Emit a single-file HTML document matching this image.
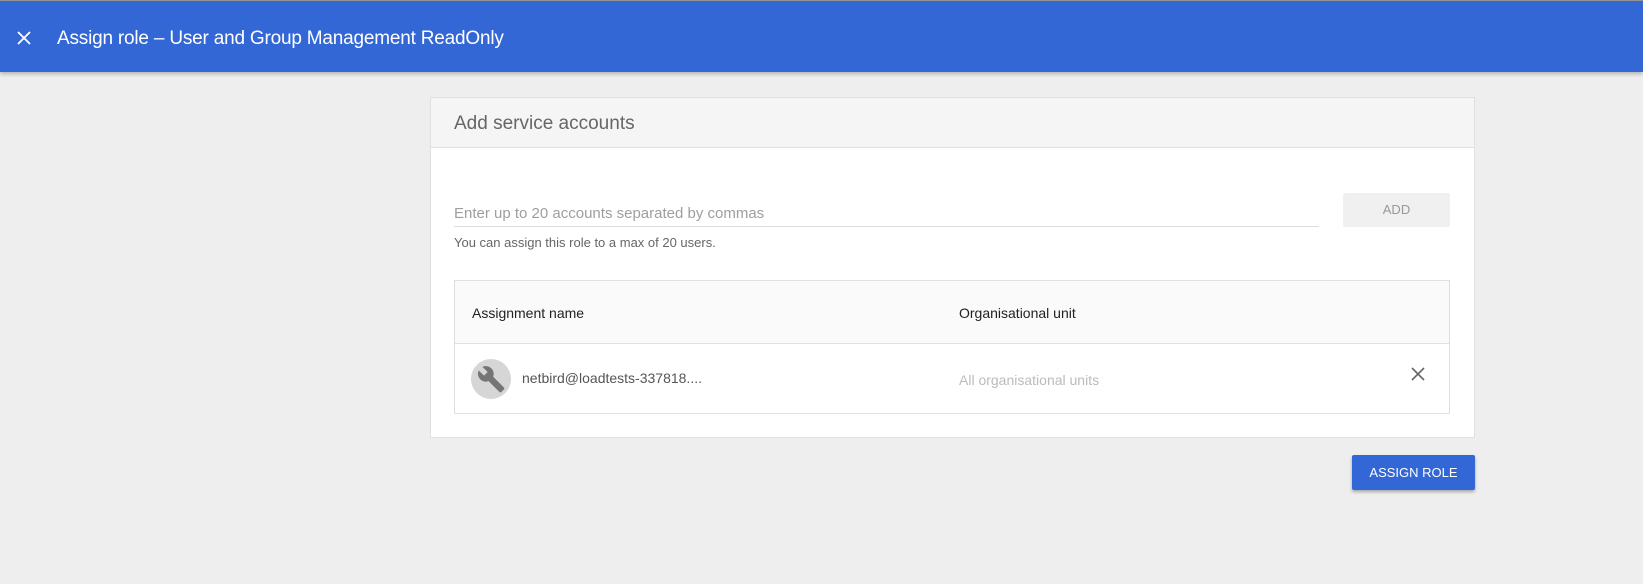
<!DOCTYPE html>
<html><head><meta charset="utf-8"><style>
*{margin:0;padding:0;box-sizing:border-box}
body{width:1643px;height:584px;background:#eeeeee;font-family:"Liberation Sans",sans-serif;position:relative;overflow:hidden}
.top{position:absolute;left:0;top:0;width:1643px;height:1px;background:#999}
.hdr{position:absolute;left:0;top:1px;width:1643px;height:71px;background:#3367d6;box-shadow:0 2px 4px rgba(0,0,0,.25)}
.hdr .t{position:absolute;left:57px;top:27px;color:#fff;font-size:19px;letter-spacing:-0.2px}
.abs{position:absolute}
.card{position:absolute;left:430px;top:97px;width:1045px;height:341px;background:#fff;border:1px solid #e0e0e0}
.ch{position:absolute;left:0;top:0;width:1043px;height:50px;background:#f5f5f5;border-bottom:1px solid #e0e0e0}
.ch span{position:absolute;left:23px;top:15px;font-size:19px;color:#666}
</style></head><body>
<div class="top"></div>
<div class="hdr">
<svg class="abs" style="left:15px;top:28px" width="18" height="18" viewBox="0 0 18 18"><path d="M3 3L15 15M15 3L3 15" stroke="#fff" stroke-width="1.8"/></svg>
<div class="t">Assign role – User and Group Management ReadOnly</div>
</div>
<div class="card">
<div class="ch"><span>Add service accounts</span></div>
<div class="abs" style="left:23px;top:107px;font-size:15px;color:#9e9e9e">Enter up to 20 accounts separated by commas</div>
<div class="abs" style="left:23px;top:128px;width:865px;height:1px;background:#ddd"></div>
<div class="abs" style="left:23px;top:137px;font-size:13px;color:#666">You can assign this role to a max of 20 users.</div>
<div class="abs" style="left:912px;top:95px;width:107px;height:34px;background:#f0f0f0;border-radius:2px;font-size:13px;color:#999;text-align:center;line-height:34px">ADD</div>
<div class="abs" style="left:23px;top:182px;width:996px;height:134px;border:1px solid #e0e0e0">
 <div class="abs" style="left:0;top:0;width:994px;height:63px;background:#fafafa;border-bottom:1px solid #e0e0e0"></div>
 <div class="abs" style="left:17px;top:24px;font-size:14px;color:#222">Assignment name</div>
 <div class="abs" style="left:504px;top:24px;font-size:14px;color:#222">Organisational unit</div>
 <div class="abs" style="left:16px;top:78px;width:40px;height:40px;border-radius:50%;background:#d6d6d6;overflow:hidden">
  <svg width="40" height="40" viewBox="0 0 24 24"><g transform="translate(3.5,3.5) scale(0.72)"><path fill="#757575" d="M22.7 19l-9.1-9.1c.9-2.3.4-5-1.5-6.9-2-2-5-2.4-7.4-1.3L9 6 6 9 1.6 4.7C.4 7.1.9 10.1 2.9 12.1c1.9 1.9 4.6 2.4 6.9 1.5l9.1 9.1c.4.4 1 .4 1.4 0l2.3-2.3c.5-.4.5-1.1.1-1.4z"/></g></svg>
 </div>
 <div class="abs" style="left:67px;top:89px;font-size:14px;color:#555">netbird@loadtests-337818....</div>
 <div class="abs" style="left:504px;top:91px;font-size:14px;color:#bbb">All organisational units</div>
 <svg class="abs" style="left:955px;top:85px" width="16" height="16" viewBox="0 0 16 16"><path d="M2 2L14 14M14 2L2 14" stroke="#666" stroke-width="1.6"/></svg>
</div>
</div>
<div class="abs" style="left:1352px;top:455px;width:123px;height:35px;background:#3367d6;border-radius:2px;box-shadow:0 2px 3px rgba(0,0,0,.3);color:#fff;font-size:13px;text-align:center;line-height:35px">ASSIGN ROLE</div>
</body></html>
